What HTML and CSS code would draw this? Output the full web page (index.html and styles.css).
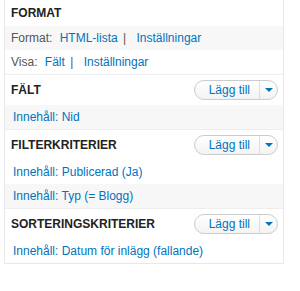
FILE: index.html
```html
<!DOCTYPE html>
<html lang="sv">
<head>
    <meta charset="UTF-8">
    <title>Vy - inställningar</title>
    <link rel="stylesheet" href="styles.css">
</head>
<body>
    <div class="views-column">
        <div class="bucket">
            <div class="bucket-title">
                <h3>FORMAT</h3>
            </div>
            <div class="setting odd">
                <span class="label">Format:</span>
                <a href="#">HTML-lista</a>
                <span class="sep">|</span>
                <a href="#">Inställningar</a>
            </div>
            <div class="setting">
                <span class="label">Visa:</span>
                <a href="#">Fält</a>
                <span class="sep">|</span>
                <a href="#">Inställningar</a>
            </div>
        </div>

        <div class="bucket">
            <div class="bucket-title">
                <h3>FÄLT</h3>
                <div class="dropbutton">
                    <a href="#" class="dropbutton-action">Lägg till</a>
                    <span class="dropbutton-toggle"><span class="arrow"></span></span>
                </div>
            </div>
            <div class="item odd"><a href="#">Innehåll: Nid</a></div>
        </div>

        <div class="bucket">
            <div class="bucket-title">
                <h3>FILTERKRITERIER</h3>
                <div class="dropbutton">
                    <a href="#" class="dropbutton-action">Lägg till</a>
                    <span class="dropbutton-toggle"><span class="arrow"></span></span>
                </div>
            </div>
            <div class="item"><a href="#">Innehåll: Publicerad (Ja)</a></div>
            <div class="item odd"><a href="#">Innehåll: Typ (= Blogg)</a></div>
        </div>

        <div class="bucket">
            <div class="bucket-title">
                <h3>SORTERINGSKRITERIER</h3>
                <div class="dropbutton">
                    <a href="#" class="dropbutton-action">Lägg till</a>
                    <span class="dropbutton-toggle"><span class="arrow"></span></span>
                </div>
            </div>
            <div class="item"><a href="#">Innehåll: Datum för inlägg (fallande)</a></div>
        </div>
    </div>
</body>
</html>
```

FILE: styles.css
```css
body {
    margin: 0;
    background: #fff;
    font-family: "Liberation Sans", Arial, sans-serif;
    font-size: 12px;
    color: #333;
}
a {
    color: #0074bd;
    text-decoration: none;
}
.views-column {
    width: 278px;
    margin-left: 4px;
    border: 1px solid #e8e8e8;
    border-top: none;
}
.bucket {
    border-bottom: 1px solid #eee;
}
.bucket:last-child {
    border-bottom: none;
}
.bucket-title {
    display: flex;
    align-items: center;
    justify-content: space-between;
    height: 30px;
    padding: 0 5px 0 6px;
}
.bucket:first-child .bucket-title {
    height: 26px;
}
.bucket-title h3 {
    margin: 0;
    font-size: 12px;
    font-weight: bold;
    color: #222;
}
.setting,
.item {
    height: 24px;
    line-height: 24px;
    padding-left: 6px;
    white-space: nowrap;
}
.item {
    padding-left: 8px;
}
.odd {
    background-color: #f7f7f7;
}
.label {
    color: #555;
    margin-right: 4px;
}
.sep {
    color: #555;
    margin: 0 7px 0 2px;
}
.dropbutton {
    display: flex;
    align-items: center;
    height: 18px;
    border: 1px solid #ccc;
    border-radius: 10px;
    background: linear-gradient(#fff, #f3f3f3);
}
.dropbutton-action {
    padding: 0 9px 0 14px;
    line-height: 18px;
    border-right: 1px solid #ddd;
}
.dropbutton-toggle {
    width: 17px;
    height: 18px;
    display: flex;
    align-items: center;
    justify-content: center;
}
.arrow {
    width: 0;
    height: 0;
    border-left: 4px solid transparent;
    border-right: 4px solid transparent;
    border-top: 4px solid #0074bd;
}
```
